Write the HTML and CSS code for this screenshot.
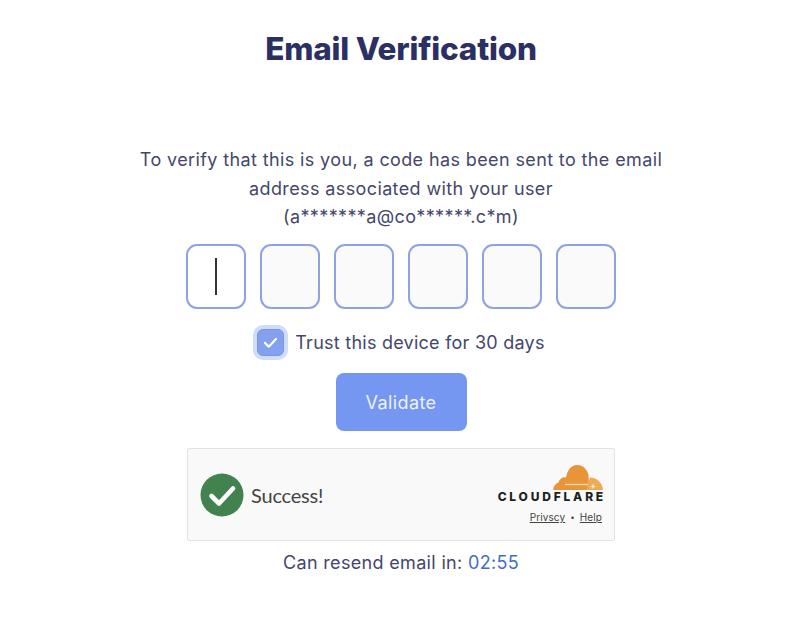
FILE: index.html
```html
<!DOCTYPE html>
<html lang="en">
<head>
<meta charset="utf-8">
<title>Email Verification</title>
<link rel="stylesheet" href="styles.css">
</head>
<body>
<main class="page">
  <h1 class="title">Email Verification</h1>
  <p class="intro">To verify that this is you, a code has been sent to the email<br>address associated with your user<br>(a*******a@co******.c*m)</p>
  <div class="code">
    <div class="digit digit-active"><span class="caret"></span></div>
    <div class="digit"></div>
    <div class="digit"></div>
    <div class="digit"></div>
    <div class="digit"></div>
    <div class="digit"></div>
  </div>
  <div class="trust">
    <span class="check">
      <svg viewBox="0 0 24 24" width="19" height="19"><path d="M5 12.500l4.800 4.800L19 7.500" fill="none" stroke="#fff" stroke-width="2.800" stroke-linecap="round" stroke-linejoin="round"/></svg>
    </span>
    <span class="trust-label">Trust this device for 30 days</span>
  </div>
  <button class="validate" type="button">Validate</button>
  <section class="captcha">
    <div class="captcha-status">
      <svg class="success-icon" viewBox="0 0 44 44" width="44" height="44"><circle cx="22" cy="22" r="21.500" fill="#41824f"/><path d="M11.500 23l7.500 7.500L33 15.500" fill="none" stroke="#fff" stroke-width="4.600" stroke-linecap="round" stroke-linejoin="round"/></svg>
      <span class="success-text">Success!</span>
    </div>
    <div class="brand">
      <svg class="cloud" viewBox="0 0 50 25" width="50" height="25">
        <path d="M0 25C.5 21 2.500 18.500 5.500 17.500 6.500 13.500 10 11.500 13 12.500 14.500 5 18 0 24 0c6 0 10 4 11.500 10l.5 15z" fill="#e8953a"/>
        <path d="M34 25c.5-5 1.500-9 3-12.500 7 0 12.500 5.500 13 12.500z" fill="#efaa55"/>
        <path d="M12 19.500h23" stroke="#f6d9ae" stroke-width="1.300"/>
        <path d="M39 21l1-2.500 1 2.500 2.500.5-2.500.5-1 2-1-2-2.500-.5z" fill="#fbeedb"/>
      </svg>
      <div class="wordmark">CLOUDFLARE</div>
      <div class="links"><span class="link">Privscy</span><span class="dot">•</span><span class="link">Help</span></div>
    </div>
  </section>
  <p class="resend">Can resend email in: <span class="timer">02:55</span></p>
</main>
</body>
</html>
```
FILE: styles.css
```css
* { box-sizing: border-box; }
html, body { margin: 0; height: 100%; background: #fff; }
body { font-family: "Inter", "Liberation Sans", sans-serif; color: #44476a; overflow: hidden; }
.page {
  display: flex;
  flex-direction: column;
  align-items: center;
  padding: 29px 0 0 15px;
  width: 787px;
}
.title {
  margin: 0;
  font-size: 31.500px;
  line-height: 40px;
  font-weight: 800;
  color: #2b2f63;
  letter-spacing: -0.2px;
}
.intro {
  margin: 77px 0 0;
  font-size: 18px;
  line-height: 28.500px;
  text-align: center;
  color: #44476a;
  letter-spacing: 0.38px;
}
.code { display: flex; gap: 14px; margin-top: 12.500px; }
.digit {
  width: 60px;
  height: 65px;
  border: 2px solid #90a2e0;
  border-radius: 11px;
  background: #fafafa;
  display: flex;
  align-items: center;
  justify-content: center;
}
.digit-active { background: #fff; }
.caret { width: 1.500px; height: 37px; background: #333; }
.trust { display: flex; align-items: center; gap: 11px; margin-top: 20px; height: 26px; }
.check {
  width: 27px;
  height: 27px;
  display: flex;
  align-items: center;
  justify-content: center;
  background: #84a1f0;
  border: 1px solid #7a96e2;
  border-radius: 6px;
  box-shadow: 0 0 0 4px #cfdcfa;
}
.trust-label { font-size: 18px; color: #44476a; letter-spacing: 0.25px; }
.validate {
  margin-top: 18px;
  width: 131px;
  height: 58px;
  border: 0;
  border-radius: 8px;
  background: #7596f1;
  color: #eef2fd;
  font: 400 18px "Inter", "Liberation Sans", sans-serif;
  letter-spacing: 0.4px;
}
.captcha {
  margin-top: 17px;
  width: 428px;
  height: 93px;
  background: #f9f9f9;
  border: 1px solid #e2e2e2;
  border-radius: 2px;
  display: flex;
  justify-content: space-between;
  padding: 0 11px 0 12px;
}
.captcha-status { display: flex; align-items: center; gap: 7px; }
.success-text { font: 20px "Lato", "Liberation Sans", sans-serif; color: #444; letter-spacing: -0.2px; }
.brand { display: flex; flex-direction: column; align-items: flex-end; padding-top: 16px; }
.cloud { display: block; }
.wordmark { font: 800 12px/14px "Inter", "Liberation Sans", sans-serif; letter-spacing: 2.800px; color: #1e1e1e; margin-right: -3px; }
.links { display: flex; align-items: center; gap: 5px; margin-top: 7px; margin-right: 1px; font: 10px/12px "Inter", "Liberation Sans", sans-serif; letter-spacing: 0.1px; color: #444; }
.link { text-decoration: underline; }
.dot { font-size: 8px; }
.resend { margin: 10px 0 0; font-size: 18px; line-height: 24px; color: #44476a; letter-spacing: 0.33px; }
.timer { color: #3f6fc4; }
```
